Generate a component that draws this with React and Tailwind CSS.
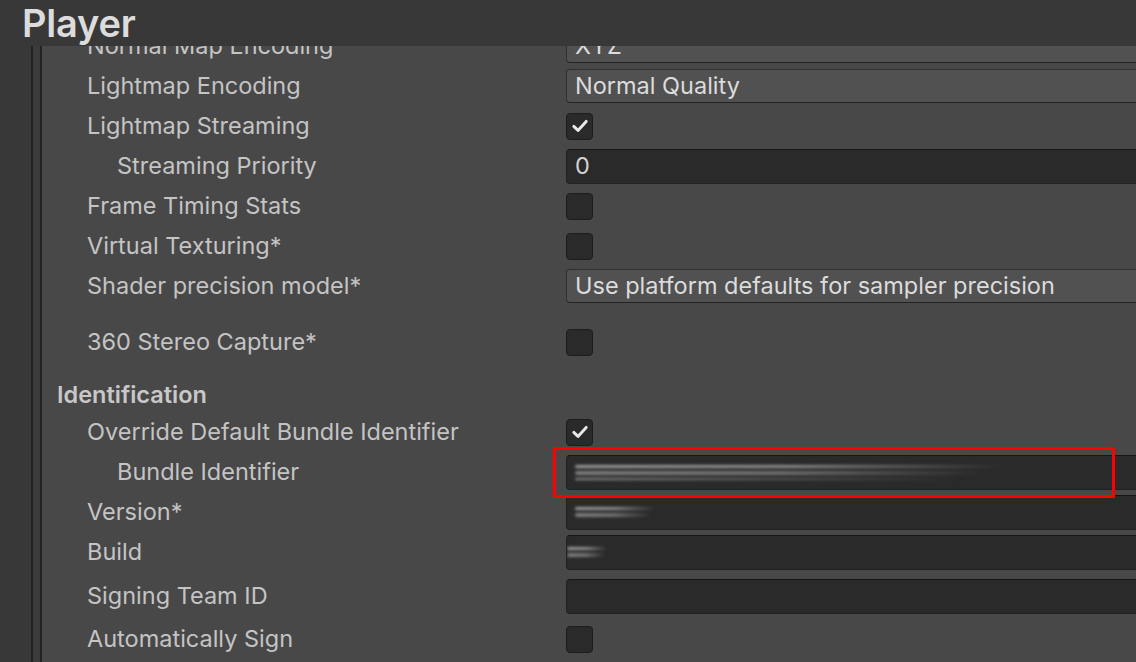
import React from "react";

const FONT = { fontFamily: "Inter, 'Noto Sans', sans-serif" };

function Check({ checked }) {
  return (
    <div className="w-[27px] h-[27px] rounded-[4px] bg-[#2a2a2a] border border-[#1c1c1c] flex items-center justify-center">
      {checked && (
        <svg width="20" height="20" viewBox="0 0 20 20" fill="none">
          <path d="M3.8 10.4 L8 14.4 L16.2 5.4" stroke="#e8e8e8" strokeWidth="2.9" strokeLinecap="round" strokeLinejoin="round" />
        </svg>
      )}
    </div>
  );
}

function Dropdown({ value }) {
  return (
    <div className="h-[34px] w-full rounded-[4px] bg-[#515151] border border-[#303030] border-b-[#242424] flex items-center px-2 text-[#dcdcdc] text-[23.5px]">
      {value}
    </div>
  );
}

function TextField({ value, children }) {
  return (
    <div className="relative h-[35px] w-full rounded-[4px] bg-[#2a2a2a] border border-[#212121] border-t-[#161616] flex items-center px-2 text-[#d2d2d2] text-[23.5px] overflow-hidden">
      {value}
      {children}
    </div>
  );
}

function Blur({ w, extra }) {
  return (
    <div className="flex flex-col gap-[3px] blur-[1.5px]">
      <div className="h-[3px] rounded-full bg-gradient-to-r from-[#a0a0a0] via-[#909090] to-transparent" style={{ width: w }} />
      <div className="h-[4px] rounded-full bg-gradient-to-r from-[#808080] via-[#727272] to-transparent" style={{ width: w * 0.95 }} />
      {extra && <div className="h-[2px] rounded-full bg-gradient-to-r from-[#909090] to-transparent" style={{ width: w * 0.9 }} />}
    </div>
  );
}

function Row({ label, indent = 0, children, className = "" }) {
  return (
    <div className={`flex items-center h-[40px] ${className}`}>
      <div
        className={`w-[524px] shrink-0 text-[23.5px] text-[#c4c4c4] whitespace-nowrap ${indent ? "pl-[75px]" : "pl-[45px]"}`}
      >
        {label}
      </div>
      <div className="flex-1 flex items-center -mr-[20px]">{children}</div>
    </div>
  );
}

export default function App() {
  return (
    <div className="w-[1136px] h-[662px] overflow-hidden bg-[#383838] flex flex-col" style={FONT}>
      <div className="h-[46px] shrink-0 bg-[#383838] pl-[22px] flex items-center relative z-10">
        <span className="text-[38px] font-semibold text-[#dcdcdc] tracking-[-0.2px] leading-none">Player</span>
      </div>
      <div className="flex flex-1 min-h-0">
        <div className="w-[31px] shrink-0" />
        <div className="w-[2px] shrink-0 bg-[#222222]" />
        <div className="w-[7px] shrink-0 bg-[#3b3b3b]" />
        <div className="w-[2px] shrink-0 bg-[#222222]" />
        <div className="relative flex-1 bg-[#484848] overflow-hidden">
          <div className="-mt-[20px]">
            <Row label="Normal Map Encoding"><Dropdown value="XYZ" /></Row>
            <Row label="Lightmap Encoding"><Dropdown value="Normal Quality" /></Row>
            <Row label="Lightmap Streaming"><Check checked /></Row>
            <Row label="Streaming Priority" indent><TextField value="0" /></Row>
            <Row label="Frame Timing Stats"><Check /></Row>
            <Row label="Virtual Texturing*"><Check /></Row>
            <Row label="Shader precision model*"><Dropdown value="Use platform defaults for sampler precision" /></Row>
            <Row label="360 Stereo Capture*" className="mt-[16px]"><Check /></Row>
            <div className="h-[40px] mt-[13px] flex items-center pl-[15px] text-[23.5px] font-semibold text-[#c8c8c8]">Identification</div>
            <Row label="Override Default Bundle Identifier" className="-mt-[3px]"><Check checked /></Row>
            <Row label="Bundle Identifier" indent>
              <TextField>
                <Blur w={430} extra />
              </TextField>
            </Row>
            <Row label="Version*">
              <TextField>
                <Blur w={80} />
              </TextField>
            </Row>
            <Row label="Build">
              <TextField>
                <div className="-ml-2"><Blur w={40} /></div>
              </TextField>
            </Row>
            <Row label="Signing Team ID" className="mt-[4px]"><TextField /></Row>
            <Row label="Automatically Sign" className="mt-[3px]"><Check /></Row>
          </div>
          <div className="absolute left-[511px] top-[401px] w-[562px] h-[51px] border-[3px] border-[#ff0000]" />
        </div>
      </div>
    </div>
  );
}
